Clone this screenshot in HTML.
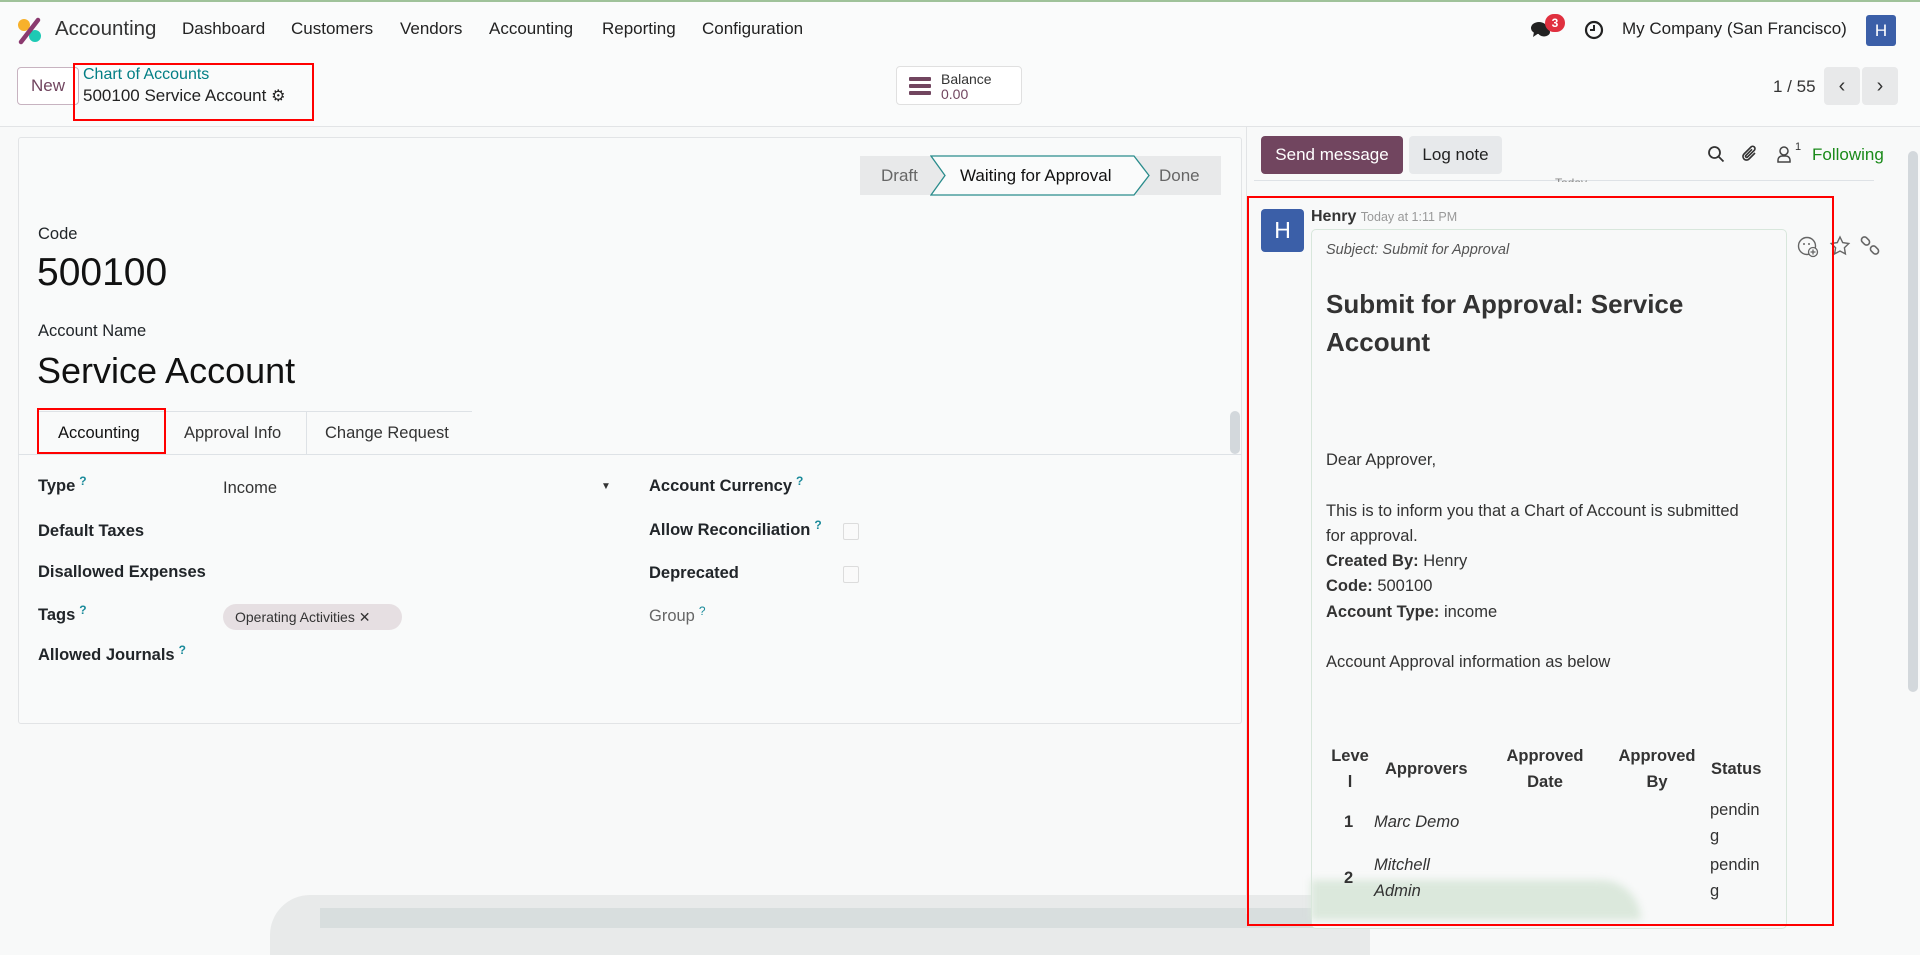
<!DOCTYPE html>
<html><head><meta charset="utf-8"><style>
*{box-sizing:border-box;margin:0;padding:0}
body{width:1920px;height:914px;overflow:hidden;background:#f8f9f9;font-family:"Liberation Sans",sans-serif;color:#212529;position:relative;font-size:17px}
.a{position:absolute;white-space:nowrap}
.nav{position:absolute;left:0;top:0;width:1920px;height:57px;background:#fafbfb;border-top:2px solid #9fc29a}
.cp{position:absolute;left:0;top:57px;width:1920px;height:70px;border-bottom:1px solid #e2e4e6;background:#fafbfb}
.btn{position:absolute;border-radius:4px}
.q{color:#1a8a9a;font-size:12px;vertical-align:top;margin-left:4px;position:relative;top:-3px}
.lbl{font-weight:bold;font-size:16.5px}
.red{position:absolute;border:2px solid #f00}
.chk{position:absolute;width:16px;height:17px;border:1px solid #dcdcdc;border-radius:2px;background:#fafafa}
</style></head><body>
<div class="nav">
 <svg class="a" style="left:16px;top:15px" width="28" height="28" viewBox="0 0 28 28"><circle cx="8" cy="8" r="6" fill="#f7b12b"/><circle cx="19" cy="19" r="6" fill="#1ec9b4"/><line x1="5" y1="25" x2="22" y2="3" stroke="#8b3a6f" stroke-width="4.5" stroke-linecap="round"/></svg>
 <div class="a" style="left:55px;top:15px;font-size:20.5px;color:#333">Accounting</div>
 <div class="a" style="left:182px;top:17px;font-size:17px;color:#222">Dashboard</div>
 <div class="a" style="left:291px;top:17px;font-size:17px;color:#222">Customers</div>
 <div class="a" style="left:400px;top:17px;font-size:17px;color:#222">Vendors</div>
 <div class="a" style="left:489px;top:17px;font-size:17px;color:#222">Accounting</div>
 <div class="a" style="left:602px;top:17px;font-size:17px;color:#222">Reporting</div>
 <div class="a" style="left:702px;top:17px;font-size:17px;color:#222">Configuration</div>
 <svg class="a" style="left:1530px;top:18px" width="22" height="20" viewBox="0 0 22 20"><ellipse cx="9" cy="8" rx="8" ry="6" fill="#222"/><path d="M4 12 L3 17 L9 13Z" fill="#222"/><ellipse cx="14" cy="12" rx="6" ry="4.5" fill="#222"/></svg>
 <div class="a" style="left:1545px;top:12px;width:20px;height:18px;border-radius:9px;background:#e0303f;color:#fff;font-size:12px;font-weight:bold;text-align:center;line-height:18px">3</div>
 <svg class="a" style="left:1584px;top:18px" width="20" height="20" viewBox="0 0 20 20"><circle cx="10" cy="10" r="8" fill="none" stroke="#222" stroke-width="2.2"/><path d="M10 5V10H6" fill="none" stroke="#222" stroke-width="2"/></svg>
 <div class="a" style="left:1622px;top:17px;font-size:17px;color:#222">My Company (San Francisco)</div>
 <div class="a" style="left:1866px;top:13px;width:30px;height:31px;border-radius:3px;background:#3b5fa8;color:#fff;font-size:17px;text-align:center;line-height:31px">H</div>
</div>
<div class="cp">
 <div class="btn" style="left:17px;top:10px;width:62px;height:38px;border:1px solid #c7b3c0;background:#fff;color:#71455f;font-size:17px;text-align:center;line-height:36px">New</div>
 <div class="a" style="left:83px;top:9px;font-size:16px;color:#017e84">Chart of Accounts</div>
 <div class="a" style="left:83px;top:29px;font-size:17px;color:#222">500100 Service Account <span style="font-size:16px">⚙</span></div>
 <div class="btn" style="left:896px;top:9px;width:126px;height:39px;border:1px solid #e0e0e0;background:#fff"></div>
 <div class="a" style="left:909px;top:20px;width:22px;height:4px;background:#71455f;box-shadow:0 7px 0 #71455f,0 14px 0 #71455f;border-radius:1px"></div>
 <div class="a" style="left:941px;top:14px;font-size:14px;color:#333">Balance</div>
 <div class="a" style="left:941px;top:29px;font-size:14px;color:#71455f">0.00</div>
 <div class="a" style="left:1773px;top:20px;font-size:17px;color:#333">1 / 55</div>
 <div class="btn" style="left:1824px;top:10px;width:36px;height:38px;background:#e8e9ea;text-align:center;line-height:38px;font-size:20px;color:#333">&#x2039;</div>
 <div class="btn" style="left:1862px;top:10px;width:36px;height:38px;background:#e8e9ea;text-align:center;line-height:38px;font-size:20px;color:#333">&#x203A;</div>
</div>
<div class="red" style="left:73px;top:63px;width:241px;height:58px"></div>

<div class="a" style="left:18px;top:137px;width:1224px;height:587px;background:#f9fafa;border:1px solid #e2e4e6;border-radius:3px"></div>
<div class="a" style="left:860px;top:156px;width:361px;height:39px;background:#e8e9ea"></div>
<div class="a" style="left:881px;top:166px;font-size:17px;color:#666">Draft</div>
<svg class="a" style="left:930px;top:155px" width="222" height="41" viewBox="0 0 222 41"><path d="M1 1H204L219 20.5L204 40H1L15 20.5Z" fill="#fafbfb" stroke="#2a8c8c" stroke-width="1.3"/></svg>
<div class="a" style="left:960px;top:166px;font-size:17px;color:#111">Waiting for Approval</div>
<div class="a" style="left:1159px;top:166px;font-size:17px;color:#666">Done</div>
<div class="a" style="left:38px;top:225px;font-size:16.5px">Code</div>
<div class="a" style="left:37px;top:251px;font-size:39px;color:#111">500100</div>
<div class="a" style="left:38px;top:322px;font-size:16.5px">Account Name</div>
<div class="a" style="left:37px;top:350px;font-size:36px;color:#111">Service Account</div>
<div class="a" style="left:37px;top:411px;width:435px;height:1px;background:#dee2e6"></div>
<div class="a" style="left:18px;top:454px;width:1224px;height:1px;background:#dee2e6"></div>
<div class="a" style="left:165px;top:411px;width:1px;height:43px;background:#dee2e6"></div>
<div class="a" style="left:306px;top:411px;width:1px;height:43px;background:#dee2e6"></div>
<div class="a" style="left:58px;top:424px;font-size:16.5px;color:#111">Accounting</div>
<div class="a" style="left:184px;top:424px;font-size:16.5px;color:#333">Approval Info</div>
<div class="a" style="left:325px;top:424px;font-size:16.5px;color:#333">Change Request</div>
<div class="red" style="left:37px;top:408px;width:129px;height:46px"></div>
<div class="a" style="left:1230px;top:411px;width:10px;height:43px;background:#d3d8dc;border-radius:5px"></div>

<div class="a lbl" style="left:38px;top:477px">Type<span class="q">?</span></div>
<div class="a" style="left:223px;top:479px;font-size:16.5px;color:#333">Income</div>
<div class="a" style="left:601px;top:481px;font-size:10px;color:#333">▼</div>
<div class="a lbl" style="left:38px;top:522px">Default Taxes</div>
<div class="a lbl" style="left:38px;top:563px">Disallowed Expenses</div>
<div class="a lbl" style="left:38px;top:606px">Tags<span class="q">?</span></div>
<div class="a" style="left:223px;top:604px;width:179px;height:26px;border-radius:13px;background:#e6dfe2;font-size:14px;line-height:26px;padding-left:12px;color:#333">Operating Activities ✕</div>
<div class="a lbl" style="left:38px;top:646px">Allowed Journals<span class="q">?</span></div>
<div class="a lbl" style="left:649px;top:477px">Account Currency<span class="q">?</span></div>
<div class="a lbl" style="left:649px;top:521px">Allow Reconciliation<span class="q">?</span></div>
<div class="chk" style="left:843px;top:523px"></div>
<div class="a lbl" style="left:649px;top:564px">Deprecated</div>
<div class="chk" style="left:843px;top:566px"></div>
<div class="a" style="left:649px;top:607px;font-size:16.5px;color:#666">Group<span class="q">?</span></div>

<div class="a" style="left:270px;top:895px;width:1100px;height:60px;background:#e8eaea;border-radius:40px 0 0 0"></div>
<div class="a" style="left:320px;top:908px;width:1050px;height:20px;background:#d8dede"></div>

<div class="a" style="left:1246px;top:127px;width:1px;height:787px;background:#e2e4e6"></div>
<div class="btn" style="left:1261px;top:136px;width:142px;height:38px;background:#71455f;color:#fff;font-size:17px;text-align:center;line-height:38px">Send message</div>
<div class="btn" style="left:1409px;top:136px;width:93px;height:38px;background:#e7e9eb;color:#222;font-size:17px;text-align:center;line-height:38px">Log note</div>
<svg class="a" style="left:1707px;top:145px" width="18" height="18" viewBox="0 0 18 18"><circle cx="7.5" cy="7.5" r="5.5" fill="none" stroke="#333" stroke-width="1.8"/><path d="M11.5 11.5L16.5 16.5" stroke="#333" stroke-width="1.8"/></svg>
<svg class="a" style="left:1741px;top:144px" width="18" height="20" viewBox="0 0 18 20"><path d="M14 9L8 15a3.5 3.5 0 0 1-5-5l7-7a2.3 2.3 0 0 1 3.3 3.3L6.5 13a1.1 1.1 0 0 1-1.6-1.6L11 5.3" fill="none" stroke="#333" stroke-width="1.6"/></svg>
<svg class="a" style="left:1776px;top:145px" width="16" height="18" viewBox="0 0 16 18"><circle cx="8" cy="6" r="4" fill="none" stroke="#444" stroke-width="1.5"/><path d="M2 17v-2a4 4 0 0 1 4-4h4a4 4 0 0 1 4 4v2z" fill="none" stroke="#444" stroke-width="1.5"/></svg>
<div class="a" style="left:1795px;top:141px;font-size:11px;color:#333">1</div>
<div class="a" style="left:1812px;top:145px;font-size:17px;color:#1a8a1a">Following</div>
<div class="a" style="left:1254px;top:180px;width:620px;height:1px;background:#dee2e6"></div>
<div class="a" style="left:1555px;top:176px;font-size:12px;color:#888;height:6px;overflow:hidden">Today</div>
<div class="a" style="left:1908px;top:151px;width:10px;height:541px;background:#d3d8dc;border-radius:5px"></div>

<div class="a" style="left:1261px;top:209px;width:43px;height:43px;border-radius:4px;background:#3b5fa8;color:#fff;font-size:23px;text-align:center;line-height:43px">H</div>
<div class="a" style="left:1311px;top:208px;font-size:16px;font-weight:bold;color:#333">Henry <span style="font-weight:normal;font-size:12.5px;color:#999">Today at 1:11 PM</span></div>
<div class="a" style="left:1311px;top:229px;width:476px;height:700px;border:1px solid #d8e7dc;border-radius:5px;background:#f8f9f9"></div>
<div class="a" style="left:1311px;top:880px;width:330px;height:40px;background:#dbe8dc;border-radius:0 60px 0 0;filter:blur(4px)"></div>
<svg class="a" style="left:1797px;top:236px" width="22" height="22" viewBox="0 0 22 22"><circle cx="10" cy="10" r="8.5" fill="none" stroke="#666" stroke-width="1.4"/><circle cx="7" cy="8" r="1" fill="#666"/><circle cx="12" cy="8" r="1" fill="#666"/><circle cx="16" cy="16" r="4.5" fill="#f8f9f9" stroke="#666" stroke-width="1.3"/><path d="M16 13.5v5M13.5 16h5" stroke="#666" stroke-width="1.3"/></svg>
<svg class="a" style="left:1829px;top:235px" width="22" height="22" viewBox="0 0 22 22"><path d="M11 2l2.7 5.6 6.1.9-4.4 4.3 1 6.1L11 16l-5.4 2.9 1-6.1L2.2 8.5l6.1-.9z" fill="none" stroke="#666" stroke-width="1.4"/></svg>
<svg class="a" style="left:1859px;top:235px" width="22" height="22" viewBox="0 0 22 22"><rect x="2" y="3" width="9" height="6" rx="3" transform="rotate(45 6.5 6)" fill="none" stroke="#666" stroke-width="1.6"/><rect x="11" y="12" width="9" height="6" rx="3" transform="rotate(45 15.5 15)" fill="none" stroke="#666" stroke-width="1.6"/></svg>

<div class="a" style="left:1326px;top:242px;font-size:14.5px;font-style:italic;color:#555">Subject: Submit for Approval</div>
<div class="a" style="left:1326px;top:285px;font-size:26px;font-weight:bold;color:#333;line-height:38px;white-space:normal;width:420px">Submit for Approval: Service Account</div>
<div class="a" style="left:1326px;top:448px;font-size:16.5px;color:#333;line-height:25.3px;white-space:normal;width:440px">Dear Approver,<br><br>This is to inform you that a Chart of Account is submitted<br>for approval.<br><b>Created By:</b> Henry<br><b>Code:</b> 500100<br><b>Account Type:</b> income<br><br>Account Approval information as below</div>
<div class="a" style="left:1326px;top:744px;font-size:16.5px;color:#333;line-height:25.5px;font-weight:bold">
 <div class="a" style="left:4px;top:0;width:40px;text-align:center">Leve<br>l</div>
 <div class="a" style="left:59px;top:13px">Approvers</div>
 <div class="a" style="left:178px;top:0;width:82px;text-align:center">Approved<br>Date</div>
 <div class="a" style="left:290px;top:0;width:82px;text-align:center">Approved<br>By</div>
 <div class="a" style="left:385px;top:13px">Status</div>
 <div class="a" style="left:18px;top:66px">1</div>
 <div class="a" style="left:48px;top:66px;font-weight:normal;font-style:italic">Marc Demo</div>
 <div class="a" style="left:384px;top:54px;font-weight:normal">pendin<br>g</div>
 <div class="a" style="left:18px;top:122px">2</div>
 <div class="a" style="left:48px;top:109px;font-weight:normal;font-style:italic">Mitchell<br>Admin</div>
 <div class="a" style="left:384px;top:109px;font-weight:normal">pendin<br>g</div>
</div>
<div class="red" style="left:1247px;top:196px;width:587px;height:730px"></div>
</body></html>
